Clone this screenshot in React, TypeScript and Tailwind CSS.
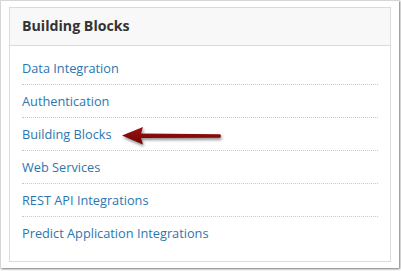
const links = [
  "Data Integration",
  "Authentication",
  "Building Blocks",
  "Web Services",
  "REST API Integrations",
  "Predict Application Integrations",
];

export default function App() {
  return (
    <div className="w-[401px] h-[271px] bg-white font-['Open_Sans',sans-serif]">
      <div className="relative w-[399px] h-[268px] bg-white border-l border-t border-[#d6d6d6] shadow-[1px_1px_2px_rgba(0,0,0,0.55)] pt-[6px] pl-[8px]">
        <div className="w-[382px] h-[255px] border border-[#dcdcdc] bg-white">
          <div className="h-[38px] bg-[#f8f8f8] border-b border-[#dcdcdc] flex items-center pl-[12px]">
            <h3 className="text-[14.2px] font-bold text-[#333] leading-none">Building Blocks</h3>
          </div>
          <ul className="pt-[6px] pl-[12px] pr-[12px]">
            {links.map((l) => (
              <li
                key={l}
                className="h-[33px] flex items-center pt-[1px] border-b border-dotted border-[#c8c8c8] last:border-b-0 text-[12.75px] text-[#2a76b0]"
              >
                {l}
              </li>
            ))}
          </ul>
        </div>
        <svg
          className="absolute left-[118px] top-[123px]"
          width="110"
          height="26"
          viewBox="0 0 110 26"
          style={{ filter: "drop-shadow(1px 2px 1.5px rgba(0,0,0,0.45))" }}
        >
          <defs>
            <linearGradient id="ar" x1="0" y1="0" x2="0" y2="1">
              <stop offset="0" stopColor="#a01010" />
              <stop offset="1" stopColor="#6e0505" />
            </linearGradient>
          </defs>
          <path
            d="M3 11.5 L24 3 L22 9.5 L101 10.3 Q103 12 101 13.7 L22 14 L24 20.5 Z"
            fill="url(#ar)"
          />
        </svg>
      </div>
    </div>
  );
}
